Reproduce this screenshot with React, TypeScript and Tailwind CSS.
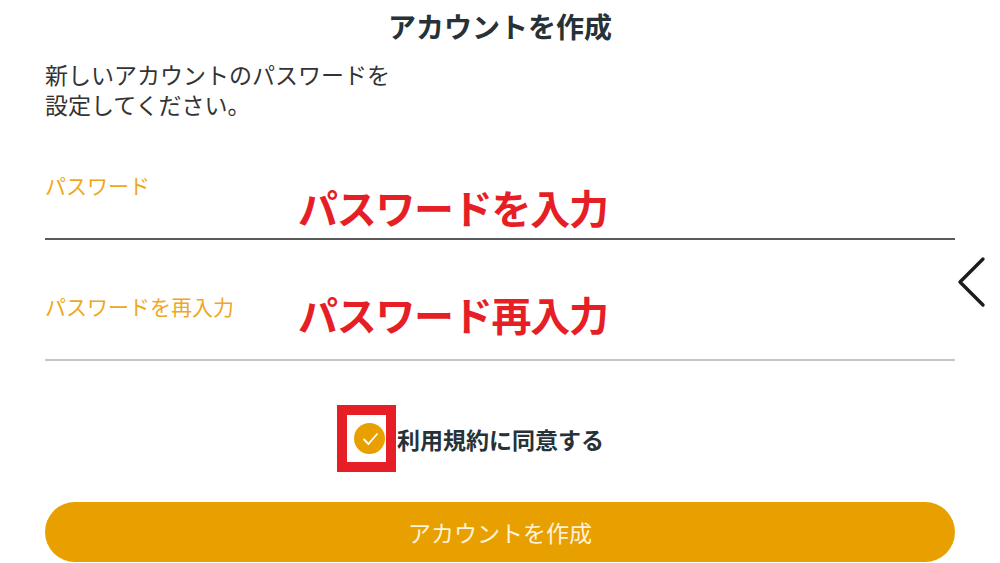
const jp = "font-['Noto_Sans_CJK_JP','Noto_Sans',sans-serif]"

function Field({
  label,
  note,
  noteTop,
  line,
}: {
  label: string
  note: string
  noteTop: string
  line: string
}) {
  return (
    <div className="relative mt-[52px]">
      <p className="text-[21px] leading-[28px] text-[#f0a71c]">{label}</p>
      <div className="h-[39px]" />
      <div className={line} />
      <span
        className={`absolute left-[253px] ${noteTop} text-[40px] font-bold leading-[50px] tracking-[-1.3px] text-[#e61e25]`}
      >
        {note}
      </span>
    </div>
  )
}

export default function App() {
  return (
    <div className={`relative h-[563px] w-[1000px] overflow-hidden bg-white ${jp}`}>
      <div className="px-[45px]">
        <h1 className="pt-[8px] text-center text-[28px] font-bold leading-[36px] text-[#263238]">
          アカウントを作成
        </h1>
        <p className="mt-[15px] text-[23px] leading-[30px] text-[#333333]">
          新しいアカウントのパスワードを
          <br />
          設定してください。
        </p>

        <Field
          label="パスワード"
          note="パスワードを入力"
          noteTop="top-[11px]"
          line="h-[2px] bg-[#5a5a5a]"
        />
        <Field
          label="パスワードを再入力"
          note="パスワード再入力"
          noteTop="top-[-3px]"
          line="h-[2px] bg-[#c6c6c6]"
        />

        <div className="mt-[44px] flex items-center pl-[292px]">
          <div className="flex h-[67px] w-[59px] items-center border-[10px] border-[#e61e25] bg-white pl-[7px]">
            <span className="flex h-[31px] w-[31px] items-center justify-center rounded-full bg-[#e8a000]">
              <svg width="22" height="22" viewBox="0 0 22 22" fill="none">
                <path
                  d="M5 11.5 L9.5 16 L18 6"
                  stroke="white"
                  strokeWidth="1.8"
                  strokeLinecap="round"
                  strokeLinejoin="round"
                />
              </svg>
            </span>
          </div>
          <span className="ml-[1px] text-[23px] font-bold leading-[30px] text-[#263238]">
            利用規約に同意する
          </span>
        </div>

        <button className="mt-[30px] flex h-[60px] w-full items-center justify-center rounded-full bg-[#e8a000] text-[23px] text-[#fdf2dc]">
          アカウントを作成
        </button>
      </div>

      <svg
        className="absolute left-[950px] top-[250px]"
        width="44"
        height="64"
        viewBox="0 0 44 64"
        fill="none"
      >
        <path
          d="M33 9 L10 32 L33 55"
          stroke="#1c1c1c"
          strokeWidth="3.4"
          strokeLinecap="round"
          strokeLinejoin="round"
        />
      </svg>
    </div>
  )
}
